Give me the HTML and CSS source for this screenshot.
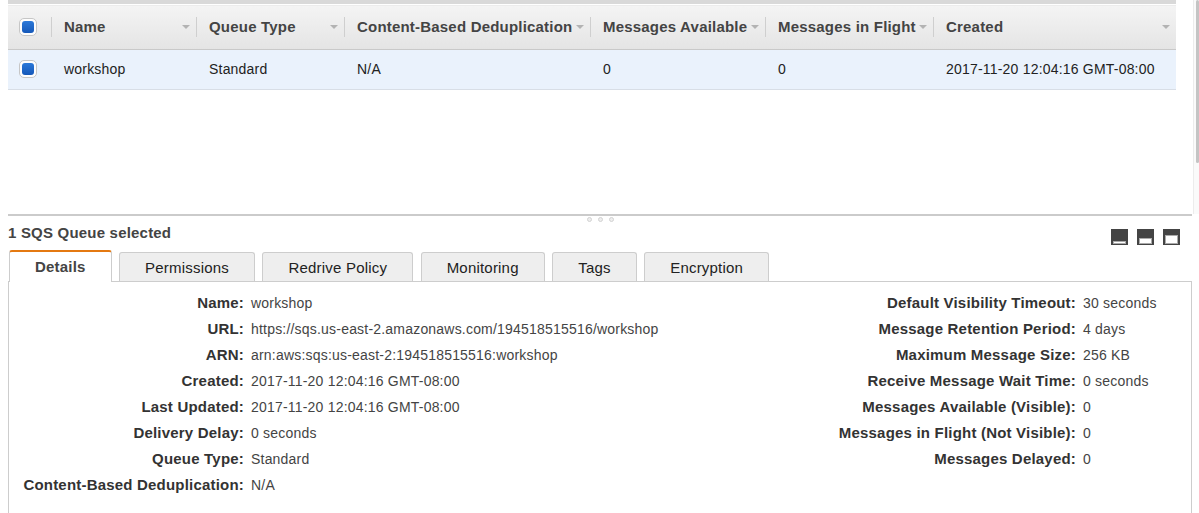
FILE: index.html
```html
<!DOCTYPE html>
<html lang="en">
<head>
    <meta charset="UTF-8">
    <title>SQS Queues</title>
    <link rel="stylesheet" href="styles.css">
</head>
<body>

    <div class="list-pane">
        <div class="grid">
            <table class="queues">
                <colgroup>
                    <col class="w-check"><col class="w-name"><col class="w-type"><col class="w-dedup">
                    <col class="w-avail"><col class="w-flight"><col class="w-created">
                </colgroup>
                <thead>
                    <tr>
                        <th><div class="th-inner check-cell"><span class="checkbox"><span class="check-fill"></span></span></div></th>
                        <th><div class="th-inner">Name<span class="sort"></span></div></th>
                        <th><div class="th-inner">Queue Type<span class="sort"></span></div></th>
                        <th><div class="th-inner">Content-Based Deduplication<span class="sort"></span></div></th>
                        <th><div class="th-inner">Messages Available<span class="sort"></span></div></th>
                        <th><div class="th-inner">Messages in Flight<span class="sort"></span></div></th>
                        <th><div class="th-inner last">Created<span class="sort"></span></div></th>
                    </tr>
                </thead>
                <tbody>
                    <tr class="selected">
                        <td class="check-cell"><span class="checkbox"><span class="check-fill"></span></span></td>
                        <td>workshop</td>
                        <td>Standard</td>
                        <td>N/A</td>
                        <td>0</td>
                        <td>0</td>
                        <td>2017-11-20 12:04:16 GMT-08:00</td>
                    </tr>
                </tbody>
            </table>
        </div>
        <div class="scroll-track"><div class="scroll-thumb"></div></div>
    </div>

    <div class="detail-pane">
        <div class="splitter">
            <span class="dot"></span><span class="dot"></span><span class="dot"></span>
        </div>

        <div class="title-row">
            <span class="title">1 SQS Queue selected</span>
            <div class="layout-icons">
                <span class="layout-icon"><span class="bar small"></span></span>
                <span class="layout-icon"><span class="bar medium"></span></span>
                <span class="layout-icon"><span class="bar large"></span></span>
            </div>
        </div>

        <div class="tabs">
            <div class="tab active">Details</div>
            <div class="tab">Permissions</div>
            <div class="tab">Redrive Policy</div>
            <div class="tab">Monitoring</div>
            <div class="tab">Tags</div>
            <div class="tab">Encryption</div>
        </div>

        <div class="panel">
            <div class="props left">
                <span class="label">Name:</span><span class="value">workshop</span>
                <span class="label">URL:</span><span class="value">https://sqs.us-east-2.amazonaws.com/194518515516/workshop</span>
                <span class="label">ARN:</span><span class="value">arn:aws:sqs:us-east-2:194518515516:workshop</span>
                <span class="label">Created:</span><span class="value">2017-11-20 12:04:16 GMT-08:00</span>
                <span class="label">Last Updated:</span><span class="value">2017-11-20 12:04:16 GMT-08:00</span>
                <span class="label">Delivery Delay:</span><span class="value">0 seconds</span>
                <span class="label">Queue Type:</span><span class="value">Standard</span>
                <span class="label">Content-Based Deduplication:</span><span class="value">N/A</span>
            </div>
            <div class="props right">
                <span class="label">Default Visibility Timeout:</span><span class="value">30 seconds</span>
                <span class="label">Message Retention Period:</span><span class="value">4 days</span>
                <span class="label">Maximum Message Size:</span><span class="value">256 KB</span>
                <span class="label">Receive Message Wait Time:</span><span class="value">0 seconds</span>
                <span class="label">Messages Available (Visible):</span><span class="value">0</span>
                <span class="label">Messages in Flight (Not Visible):</span><span class="value">0</span>
                <span class="label">Messages Delayed:</span><span class="value">0</span>
            </div>
        </div>
    </div>

</body>
</html>
```

FILE: styles.css
```css
body {
    margin: 0;
    font-family: "Liberation Sans", Arial, sans-serif;
    letter-spacing: 0.2px;
    color: #444;
    background-color: #fff;
}

/* lista de filas */
.list-pane {
    display: flex;
    height: 214px;
}
.grid {
    width: 1168px;
    margin-left: 8px;
    border-top: 4px solid #d9d9d9;
}
.scroll-track {
    margin-left: auto;
    width: 5px;
    background-color: #fafafa;
    border-left: 1px solid #ececec;
}
.scroll-thumb {
    width: 3px;
    height: 163px;
    margin-left: 2px;
    background-color: #c4c4c4;
    border-radius: 2px;
}

.queues {
    width: 100%;
    border-collapse: collapse;
    table-layout: fixed;
}
.w-check { width: 44px; }
.w-name { width: 145px; }
.w-type { width: 148px; }
.w-dedup { width: 246px; }
.w-avail { width: 175px; }
.w-flight { width: 168px; }
.w-created { width: 242px; }

.queues th {
    height: 43px;
    padding: 0 0 1px 0;
    background: linear-gradient(#f4f4f4, #e4e4e4);
    border-top: 1px solid #fff;
    border-bottom: 1px solid #c9c9c9;
    text-align: left;
    font-size: 15px;
    font-weight: bold;
    color: #444;
}
.th-inner {
    display: flex;
    align-items: center;
    height: 20px;
    padding-left: 12px;
    border-right: 1px solid #cfcfcf;
    box-shadow: 1px 0 0 #f8f8f8;
    white-space: nowrap;
}
.th-inner.last {
    border-right: none;
    box-shadow: none;
}
.th-inner.check-cell {
    padding-left: 11px;
}
.sort {
    margin-left: auto;
    margin-right: 6px;
    border-left: 4px solid transparent;
    border-right: 4px solid transparent;
    border-top: 4px solid #b3b3b3;
}

.queues td {
    height: 37px;
    padding: 0 0 2px 12px;
    font-size: 14px;
    color: #222;
    border-bottom: 1px solid #d8dee6;
    white-space: nowrap;
}
.queues td.check-cell {
    padding-left: 11px;
}
.selected td {
    background-color: #eaf2fc;
}

.checkbox {
    display: inline-block;
    vertical-align: middle;
    width: 18px;
    height: 18px;
    padding: 2px;
    box-sizing: border-box;
    border: 1px solid #c6c6c6;
    border-radius: 5px;
    background-color: #fdfdfd;
}
.check-fill {
    display: block;
    width: 12px;
    height: 12px;
    border-radius: 3px;
    background: linear-gradient(#2b78d8, #1558b9);
}

/* painel de detalhes */
.detail-pane {
    margin: 0 7px 0 8px;
}
.splitter {
    display: flex;
    justify-content: center;
    gap: 6px;
    height: 6px;
    padding-top: 1px;
    border-top: 2px solid #cbcbcb;
}
.dot {
    width: 5px;
    height: 5px;
    box-sizing: border-box;
    border-radius: 50%;
    background-color: #eee;
    border: 1px solid #d2d2d2;
}

.title-row {
    display: flex;
    align-items: center;
    height: 27px;
}
.title {
    padding-bottom: 9px;
    font-size: 15px;
    font-weight: bold;
    color: #444;
}
.layout-icons {
    display: flex;
    gap: 9px;
    margin-left: auto;
    margin-right: 12px;
    padding-top: 1px;
}
.layout-icon {
    display: flex;
    align-items: flex-end;
    justify-content: center;
    width: 17px;
    height: 16px;
    padding-bottom: 1px;
    box-sizing: border-box;
    background-color: #444;
}
.bar {
    width: 13px;
    box-sizing: border-box;
    background-color: #fff;
    border: 1px solid #aaa;
}
.bar.small { height: 3px; }
.bar.medium { height: 6px; }
.bar.large { height: 9px; }

.tabs {
    display: flex;
    align-items: flex-end;
    gap: 7.5px;
    height: 31px;
    padding-left: 1px;
}
.tab {
    height: 29px;
    padding: 2px 25px 0;
    box-sizing: border-box;
    border: 1px solid #cdcdcd;
    border-bottom: none;
    border-radius: 3px 3px 0 0;
    background-color: #eee;
    font-size: 15px;
    line-height: 26px;
    color: #222;
}
.tab.active {
    height: 32px;
    margin-bottom: -1px;
    border-top: 2px solid #e47911;
    background-color: #fff;
    font-weight: bold;
    color: #444;
}

.panel {
    display: flex;
    justify-content: space-between;
    min-height: 232px;
    padding-top: 8px;
    box-sizing: border-box;
    border: 1px solid #cdcdcd;
    border-bottom: none;
}
.props {
    display: grid;
    column-gap: 7px;
    align-content: start;
    align-items: baseline;
    line-height: 26px;
}
.props.left {
    grid-template-columns: 235px auto;
}
.props.right {
    grid-template-columns: 260px 108px;
}
.label {
    text-align: right;
    font-size: 15px;
    font-weight: bold;
    color: #333;
    white-space: nowrap;
}
.value {
    font-size: 14px;
    color: #444;
    white-space: nowrap;
}
```
